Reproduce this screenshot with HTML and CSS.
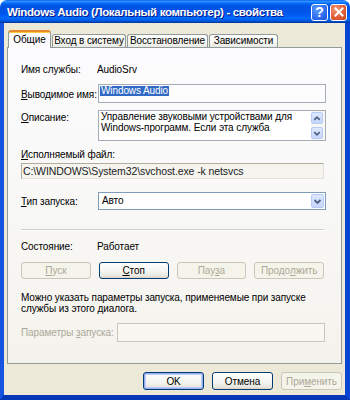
FILE: index.html
```html
<!DOCTYPE html>
<html>
<head>
<meta charset="utf-8">
<link rel="stylesheet" href="styles.css">
</head>
<body>
<div class="window">
  <div class="titlebar">
    <span class="title">Windows Audio (Локальный компьютер) - свойства</span>
    <div class="tb-btns">
      <span class="tb-btn help">?</span>
      <span class="tb-btn close"><svg width="10" height="10" viewBox="0 0 10 10"><path d="M1.5 1.5 L8.5 8.5 M8.5 1.5 L1.5 8.5" stroke="#fff" stroke-width="2" stroke-linecap="square"/></svg></span>
    </div>
  </div>
  <div class="frame">
    <div class="tabs">
      <div class="tab active t1">Общие</div>
      <div class="tab t2">Вход в систему</div>
      <div class="tab t3">Восстановление</div>
      <div class="tab t4">Зависимости</div>
    </div>
    <div class="panel">
      <div class="row r-name">
        <span class="label">Имя службы:</span>
        <span class="value">AudioSrv</span>
      </div>
      <div class="row r-disp">
        <span class="label lbl-5"><u>В</u>ыводимое имя:</span>
        <div class="field disp"><span class="sel">Windows Audio</span></div>
      </div>
      <div class="row r-desc">
        <span class="label lbl-2"><u>О</u>писание:</span>
        <div class="field desc">
          <div class="desc-text">Управление звуковыми устройствами для<br>Windows-программ. Если эта служба</div>
          <div class="scroll">
            <span class="sbtn"><svg width="11" height="11" viewBox="0 0 11 11"><polyline points="2.5,7 5.5,4 8.5,7" fill="none" stroke="#4d6185" stroke-width="1.8"/></svg></span>
            <span class="sbtn"><svg width="11" height="11" viewBox="0 0 11 11"><polyline points="2.5,4 5.5,7 8.5,4" fill="none" stroke="#4d6185" stroke-width="1.8"/></svg></span>
          </div>
        </div>
      </div>
      <div class="r-exe-label"><u>И</u>сполняемый файл:</div>
      <div class="field exe">C:\WINDOWS\System32\svchost.exe -k netsvcs</div>
      <div class="row r-type">
        <span class="label lbl-4"><u>Т</u>ип запуска:</span>
        <div class="field combo">
          <span class="combo-text">Авто</span>
          <span class="dd"><svg width="11" height="11" viewBox="0 0 11 11"><polyline points="2.5,4 5.5,7 8.5,4" fill="none" stroke="#4d6185" stroke-width="1.8"/></svg></span>
        </div>
      </div>
      <div class="separator"></div>
      <div class="row r-state">
        <span class="label">Состояние:</span>
        <span class="value">Работает</span>
      </div>
      <div class="svc-btns">
        <span class="btn disabled"><u>П</u>уск</span>
        <span class="btn"><u>С</u>топ</span>
        <span class="btn disabled">Пау<u>з</u>а</span>
        <span class="btn disabled">Продо<u>л</u>жить</span>
      </div>
      <p class="hint">Можно указать параметры запуска, применяемые при запуске<br>службы из этого диалога.</p>
      <div class="row r-params">
        <span class="label params-label">Параметры <u>з</u>апуска:</span>
        <div class="field params"></div>
      </div>
    </div>
    <div class="actions">
      <span class="btn default">OK</span>
      <span class="btn">Отмена</span>
      <span class="btn disabled">При<u>м</u>енить</span>
    </div>
  </div>
</div>
</body>
</html>
```
FILE: styles.css
```css
* { box-sizing: border-box; }
html, body { margin: 0; padding: 0; background: #ffffff; }
body { font-family: "Liberation Sans", Arial, sans-serif; font-size: 10px; letter-spacing: -0.1px; color: #000; }
u { text-decoration: underline; text-underline-offset: 1px; }

.window {
  width: 350px;
  height: 400px;
  display: flex;
  flex-direction: column;
}

.titlebar {
  height: 23px;
  flex: none;
  display: flex;
  align-items: center;
  justify-content: space-between;
  padding: 0 3px 0 7px;
  border-radius: 7px 7px 0 0;
  background: linear-gradient(to bottom, #0058ee 0%, #3593ff 5%, #288eff 8%, #127dff 11%, #036ffc 14%, #0262ee 18%, #0057e5 24%, #0054e3 30%, #0055eb 56%, #005bf5 66%, #026afe 76%, #0062ef 86%, #0052d6 92%, #0040ab 97%, #003092 100%);
}
.title {
  color: #fff;
  font-weight: bold;
  font-size: 11.5px;
  letter-spacing: -0.35px;
  text-shadow: 1px 1px 0 #0a1883;
  white-space: nowrap;
}
.tb-btns { display: flex; gap: 2px; margin-top: 1px; }
.tb-btn {
  width: 17px;
  height: 17px;
  border: 1px solid #fff;
  border-radius: 3px;
  display: flex;
  align-items: center;
  justify-content: center;
}
.help {
  background: radial-gradient(circle at 35% 30%, #5d9bff 0%, #2f6ff3 55%, #1a4fd6 100%);
  color: #fff;
  font-weight: bold;
  font-size: 14px;
  letter-spacing: 0;
}
.close {
  background: radial-gradient(circle at 35% 30%, #f29a7b 0%, #e2623c 50%, #c7421d 100%);
}

.frame {
  flex: 1;
  background: #ece9d8;
  border-left: 4px solid #1553e0;
  border-right: 5px solid #0b45d6;
  border-bottom: 5px solid #0637b6;
  display: flex;
  flex-direction: column;
}

.tabs {
  height: 24px;
  flex: none;
  display: flex;
  align-items: flex-end;
  padding-left: 4px;
}
.tab {
  height: 13px;
  line-height: 12px;
  border: 1px solid #919b9c;
  border-bottom: none;
  border-radius: 3px 3px 0 0;
  background: linear-gradient(#ffffff, #f3f3ef 70%, #e9e8e1);
  text-align: center;
  white-space: nowrap;
  margin-right: 1px;
}
.tab.active {
  height: 18px;
  line-height: 16px;
  margin-bottom: -1px;
  position: relative;
  z-index: 1;
  background: #fcfcfe;
  border-top: 2px solid #e68b2c;
  box-shadow: inset 0 1px 0 #ffc73c;
}
.t1 { width: 43px; }
.t2 { width: 74px; }
.t3 { width: 81px; }
.t4 { width: 69px; }

.panel {
  height: 317px;
  flex: none;
  margin: 0 3px;
  border: 1px solid #919b9c;
  background: linear-gradient(#fcfcfe, #f6f5f1 80%, #f3f2ec);
  padding: 16px 15px 0 13px;
  display: flex;
  flex-direction: column;
}

.row { display: flex; align-items: flex-start; }
.label { width: 77px; flex: none; line-height: 12px; white-space: nowrap; }
.value { line-height: 12px; margin-left: -1px; }
.lbl-5 { padding-top: 5px; }
.lbl-2 { padding-top: 2px; }
.lbl-4 { padding-top: 4px; }

.field {
  border: 1px solid #a5acb5;
  background: #fdfdfd;
}
.r-disp { margin-top: 8px; }
.disp { flex: 1; height: 19px; padding: 1px 1px; line-height: 10px; }
.sel { background: #316ac5; color: #fff; padding: 0 1px; display: inline-block; line-height: 10px; }

.r-desc { margin-top: 7px; }
.desc { flex: 1; height: 31px; display: flex; background: #fff; }
.desc-text { flex: 1; padding: 0 0 0 2px; line-height: 11px; white-space: nowrap; overflow: hidden; }
.scroll {
  width: 14px;
  display: flex;
  flex-direction: column;
  justify-content: space-between;
  padding: 1px 1px 1px 0;
  background: #f7f7f4;
}
.sbtn, .dd {
  width: 12px;
  height: 12px;
  border: 1px solid #b7caf5;
  border-radius: 2px;
  background: linear-gradient(#dde8fe, #c6d6fb);
  display: flex;
  align-items: center;
  justify-content: center;
}

.r-exe-label { margin-top: 8px; line-height: 12px; }
.exe {
  margin-top: 2px;
  margin-right: 2px;
  height: 16px;
  line-height: 14px;
  padding-left: 1px;
  font-size: 10.5px;
  background: #f5f4ef;
  border-color: #b0ada0 #e3e1d8 #e3e1d8 #b0ada0;
  color: #222;
  white-space: nowrap;
}

.r-type { margin-top: 13px; }
.combo {
  flex: 1;
  height: 18px;
  display: flex;
  align-items: center;
  justify-content: space-between;
  border-color: #7f9db9;
  background: #fff;
  padding: 0 1px 0 3px;
}
.combo-text { line-height: 12px; }
.dd { width: 13px; height: 14px; }

.separator {
  margin-top: 19px;
  margin-right: 2px;
  height: 2px;
  border-top: 1px solid #d0d0bf;
  border-bottom: 1px solid #ffffff;
}

.r-state { margin-top: 10px; }

.svc-btns {
  margin-top: 9px;
  margin-right: 2px;
  display: grid;
  grid-template-columns: repeat(4, 1fr);
  gap: 8px;
}

.btn {
  height: 17px;
  border: 1px solid #003c74;
  border-radius: 3px;
  background: linear-gradient(#ffffff, #f3f3ef 60%, #e6e4da 90%, #d6d0c5);
  display: flex;
  align-items: center;
  justify-content: center;
  white-space: nowrap;
}
.btn.disabled {
  border-color: #c9c7ba;
  color: #aca899;
  background: #f5f4ea;
}

.hint { margin: 13px 0 0 0; line-height: 11px; }

.r-params { margin-top: 9px; }
.params-label { width: auto; padding-top: 4px; color: #aca899; margin-right: 3px; }
.params { flex: 1; height: 19px; margin-right: 1px; border-color: #c9c7ba; background: #f8f7f2; }

.actions {
  margin-top: 8px;
  display: flex;
  justify-content: flex-end;
  gap: 8px;
  padding-right: 3px;
}
.actions .btn { width: 61px; height: 18px; }
.btn.default { box-shadow: inset 0 0 0 1px #97aef4, inset 0 0 0 2px #bccbf7; }
```
